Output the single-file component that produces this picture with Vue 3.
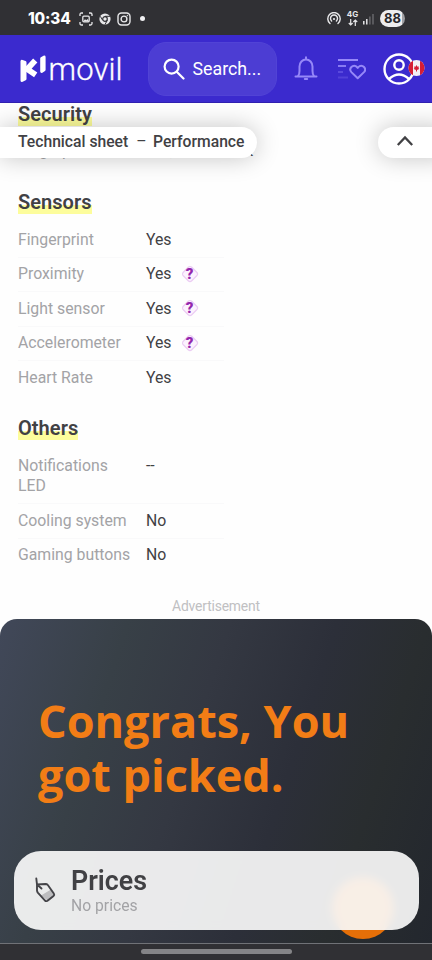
<script setup>
const sections = [
  { title: 'Security', rows: [{ label: 'Fingerprint', value: 'Yes, On the back' }] },
  {
    title: 'Sensors',
    rows: [
      { label: 'Fingerprint', value: 'Yes' },
      { label: 'Proximity', value: 'Yes', help: true },
      { label: 'Light sensor', value: 'Yes', help: true },
      { label: 'Accelerometer', value: 'Yes', help: true },
      { label: 'Heart Rate', value: 'Yes' },
    ],
  },
  {
    title: 'Others',
    rows: [
      { label: 'Notifications LED', value: '--' },
      { label: 'Cooling system', value: 'No' },
      { label: 'Gaming buttons', value: 'No' },
    ],
  },
]
</script>

<template>
  <div class="screen">
    <div class="status">
      <span class="time">10:34</span>
      <svg class="s-shot" width="14" height="14" viewBox="0 0 14 14" fill="none" stroke="#e8e8ea" stroke-width="1.3">
        <path d="M1 4V2.5Q1 1 2.5 1H4M10 1h1.5Q13 1 13 2.500V4M13 10v1.500Q13 13 11.500 13H10M4 13H2.500Q1 13 1 11.500V10" />
        <rect x="3.800" y="4.200" width="6.400" height="5.600" rx="1" />
        <path d="M4 9.500l2-2.200 1.300 1 1.200-1.300 1.700 2.500z" fill="#e8e8ea" stroke="none" />
      </svg>
      <svg class="s-chrome" width="12" height="12" viewBox="0 0 12 12">
        <circle cx="6" cy="6" r="5.600" fill="#e8e8ea" />
        <circle cx="6" cy="6" r="2.300" fill="#e8e8ea" stroke="#303034" stroke-width="1.200" />
        <path d="M6 3.300h5M3.700 7.300L1.300 3.300M8.300 7.300L6 11.500" stroke="#303034" stroke-width="1" />
      </svg>
      <svg class="s-insta" width="14" height="14" viewBox="0 0 14 14" fill="none" stroke="#e8e8ea" stroke-width="1.400">
        <rect x="1" y="1" width="12" height="12" rx="3.500" />
        <circle cx="7" cy="7" r="2.900" />
        <circle cx="10.400" cy="3.600" r=".5" fill="#e8e8ea" stroke-width=".4" />
      </svg>
      <i class="dot"></i>
      <span class="grow"></span>
      <svg class="s-cast" width="14" height="13" viewBox="0 0 14 13" fill="none" stroke="#e8e8ea" stroke-width="1.400" stroke-linecap="round">
        <path d="M3 11.500A6.200 6.200 0 1 1 11 11.500M4.600 9A3.500 3.500 0 1 1 9.400 9" />
        <circle cx="7" cy="7" r="1.100" fill="#e8e8ea" stroke="none" />
      </svg>
      <div class="net">
        <span>4G</span>
        <svg width="10" height="7" viewBox="0 0 10 7" fill="none" stroke="#e8e8ea" stroke-width="1.200">
          <path d="M2.700 0v6M.8 4l1.900 2 1.900-2M7.300 7V1M5.400 3l1.900-2 1.900 2" />
        </svg>
      </div>
      <svg class="s-signal" width="11" height="12" viewBox="0 0 11 12">
        <path d="M.8 8v3.500M3.800 6v5.500" stroke="#f0f0f2" stroke-width="1.400" />
        <path d="M6.900 3.500v8M10 1v10.500" stroke="#747479" stroke-width="1.200" />
      </svg>
      <span class="battery">88</span>
    </div>

    <header class="header">
      <div class="logo">
        <svg width="27" height="30" viewBox="0 0 27 30" fill="none" stroke="#fff" stroke-linejoin="round" stroke-linecap="round">
          <path d="M2 7.300V26.500L5 25V8.500z" stroke-width="3" fill="#fff" />
          <path d="M13.300 8.600L7.200 15.200L13.300 19.300" stroke-width="5.800" stroke-linecap="square" />
          <path d="M21.600 4.500v13l2.600-1.700V3z" stroke-width="2.800" fill="#fff" />
        </svg>
        <span>movil</span>
      </div>
      <div class="search">
        <svg width="22" height="22" viewBox="0 0 22 22" fill="none" stroke="#fff" stroke-width="2.200" stroke-linecap="round">
          <circle cx="8.600" cy="8.600" r="7" />
          <path d="M14 14l6.500 6.500" />
        </svg>
        <span>Search...</span>
      </div>
      <svg class="bell" width="24" height="25" viewBox="0 0 24 25" fill="none" stroke="#9688f8" stroke-width="2" stroke-linejoin="round" stroke-linecap="round">
        <path d="M1.500 20.500h21M4 20c1-1 1.500-2.500 1.500-5v-4.500a6.500 7 0 0 1 13 0V15c0 2.500.5 4 1.500 5M12 3V1.300M10.800 23h2.400" />
      </svg>
      <svg class="wish" width="29" height="22" viewBox="0 0 29 22" fill="none" stroke="#9688f8" stroke-width="2" stroke-linejoin="round">
        <path d="M1 2h20" />
        <path d="M1 8h8" opacity=".85" />
        <path d="M1 14h5" opacity=".35" />
        <path d="M1 19.500h10" opacity=".25" />
        <path d="M20.700 20.300l-6.300-6.200a3.700 3.700 0 0 1 0-5.100c1.600-1.700 4.100-1.700 5.500 0l.8 1 .8-1c1.400-1.700 3.900-1.700 5.500 0a3.700 3.700 0 0 1 0 5.100z" />
      </svg>
      <svg class="user" width="42" height="32" viewBox="0 0 42 32" fill="none">
        <g stroke="#fff" stroke-width="2.400">
          <circle cx="16" cy="16" r="14.500" />
          <circle cx="16" cy="12" r="4.700" />
          <path d="M6 26q10-9 20 0" />
        </g>
        <clipPath id="flag"><circle cx="33.500" cy="15" r="8" /></clipPath>
        <g clip-path="url(#flag)">
          <path fill="#f3eef4" d="M25 7h17v16H25z" />
          <path fill="#d51d35" d="M25 7h5v16h-5zM37 7h5v16h-5zM33.500 12l1 1.700 1.500-.2-.5 1.500.8 1-2.300 1v1.500h-1V17l-2.300-1 .8-1-.5-1.500 1.500.2z" />
        </g>
      </svg>
    </header>

    <main class="specs">
      <section v-for="s in sections" :key="s.title">
        <h2><span>{{ s.title }}</span></h2>
        <dl>
          <div v-for="r in s.rows" :key="r.label" class="row">
            <dt>{{ r.label }}</dt>
            <dd>
              {{ r.value }}
              <span v-if="r.help" class="help">
                <svg width="18" height="18" viewBox="0 0 18 18"><rect x="3" y="3" width="12" height="12" rx="2.500" transform="rotate(45 9 9)" fill="#fcf2fe" stroke="#ebccf3" stroke-width="1.200" /></svg>
                <b>?</b>
              </span>
            </dd>
          </div>
        </dl>
      </section>
      <p class="ad-label">Advertisement</p>
    </main>

    <section class="ad">
      <p>Congrats, You<br />got picked.</p>
      <i class="orb"></i>
    </section>

    <div class="home"><i></i></div>

    <div class="crumb">Technical sheet<span>–</span>Performance</div>
    <div class="totop">
      <svg width="18" height="12" viewBox="0 0 18 12" fill="none" stroke="#414144" stroke-width="2.300"><path d="M1.800 10L9 2.500l7.200 7.500" /></svg>
    </div>

    <div class="prices">
      <svg width="24" height="28" viewBox="0 0 24 28" fill="none" stroke="#444448" stroke-width="1.900" stroke-linejoin="round" stroke-linecap="round">
        <path d="M8 18.500L18 12.500l3.300 5q.7 1.300-.5 2.300l-4.600 3.700q-1.200.8-2.200-.4z" fill="#bdbdbf" stroke="none" />
        <path d="M4 7.500l8.500-.5q1.500 0 2.300 1l6 8.500q1 1.400-.3 2.500l-6 4.700q-1.600 1-2.700-.4L4.800 15.600q-.7-1-.8-2.200zM3.300 1.500L4 7.500l4.500 4" />
      </svg>
      <div>
        <h3>Prices</h3>
        <p>No prices</p>
      </div>
    </div>
  </div>
</template>

<style>
body { margin: 0; background: #fff; }
</style>

<style scoped>
* { box-sizing: border-box; }
h2, h3, p, dl, dd { margin: 0; }
svg { display: block; flex: none; }
.screen { position: relative; width: 432px; height: 960px; overflow: hidden; display: flex; flex-direction: column; background: #fefefe; font-family: Roboto, "Liberation Sans", sans-serif; color: #414144; }
.status { height: 35px; flex: none; display: flex; align-items: center; padding: 2px 27px 0 28px; background: #303034; color: #fff; position: relative; z-index: 3; }
.time { font: 800 15.300px/20px Inter, sans-serif; width: 51px; letter-spacing: -.15px; }
.s-chrome { margin-left: 6px; }
.s-insta { margin-left: 6px; }
.dot { width: 5px; height: 5px; border-radius: 50%; background: #f0f0f2; margin-left: 9px; }
.grow { flex: 1; }
.net { margin-left: 6px; width: 11px; display: flex; flex-direction: column; align-items: center; color: #e8e8ea; font: 700 8px/7px Inter, sans-serif; gap: 1px; }
.s-signal { margin-left: 5px; }
.battery { margin-left: 6px; width: 25px; height: 17px; border-radius: 9px; background: linear-gradient(90deg, #ededef 86%, #a0a0a4 86%); color: #28282c; font: 700 13px/17px Inter, sans-serif; text-align: center; }

.header { height: 68px; flex: none; display: flex; align-items: center; padding: 0 7px 0 20px; background: #3b2ace; position: relative; z-index: 2; border-bottom: 1px solid #3020b0; }
.logo { display: flex; align-items: center; width: 128px; color: #fff; }
.logo span { font-size: 31px; line-height: 38px; font-weight: 300; letter-spacing: .15px; margin-left: 1.500px; padding-top: 2px; -webkit-text-stroke: .3px #fff; }
.search { width: 129px; height: 54px; border-radius: 18px; background: #4c3dd3; border: 1px solid #5143d6; display: flex; align-items: center; padding-left: 14px; gap: 7.500px; color: #fff; font-size: 17.800px; white-space: nowrap; }
.bell { margin-left: 17px; }
.wish { margin-left: 19px; }
.user { margin-left: 17px; }

.specs { height: 516px; flex: none; padding-left: 18px; position: relative; overflow: hidden; }
.specs section { margin-bottom: 21.300px; }
.specs section:first-child { margin-top: -1.300px; }
.specs section:first-child dd { letter-spacing: -.6px; }
h2 { height: 24px; font-size: 20px; line-height: 24px; font-weight: 600; letter-spacing: .05px; margin-bottom: 8.500px; }
h2 span { display: inline-block; background: linear-gradient(transparent 62%, #fdfd9c 62%); }
.row { display: flex; width: 206px; padding: 7px 0 6.500px; line-height: 20.500px; font-size: 15.800px; border-bottom: 1px solid #f9f9fa; margin-bottom: -.5px; }
.row:last-child { border-color: transparent; }
dt { width: 128px; padding-right: 14px; color: #a3a3a6; flex: none; }
dd { display: flex; align-items: center; white-space: nowrap; height: 20.500px; }
.help { display: grid; place-items: center; margin: -1px 0 0 9px; }
.help > * { grid-area: 1 / 1; }
.help b { font-size: 15px; line-height: 18px; color: #9427ad; font-weight: 900; }
.ad-label { position: absolute; left: 0; right: 0; bottom: 4px; text-align: center; font-size: 13.900px; line-height: 18px; color: #c0c0c2; letter-spacing: -.18px; }

.ad { height: 324px; flex: none; border-radius: 17px 17px 0 0; position: relative; background: linear-gradient(108deg, #414859 0%, #384047 24%, #343842 43%, #2c2f39 63%, #292d2f 80%, #23272e 100%); padding: 75px 38px; }
.ad p { font: 700 45px/54px "Open Sans", sans-serif; color: #f27d16; white-space: nowrap; }
.orb { position: absolute; left: 332px; top: 258px; width: 62px; height: 62px; border-radius: 50%; background: #e56f08; }
.home { height: 17px; flex: none; background: #303034; border-top: 1px solid #707277; display: flex; justify-content: center; padding-top: 5px; }
.home i { width: 151px; height: 5px; border-radius: 3px; background: #848487; }

.crumb { position: absolute; z-index: 1; left: 0; top: 127px; width: 257px; height: 31px; border-radius: 0 16px 16px 0; background: #fff; box-shadow: 0 0 25px rgba(0, 0, 0, .23); padding-left: 18px; font-size: 15.700px; line-height: 30px; font-weight: 500; white-space: nowrap; }
.crumb span { margin: 0 6.500px 0 8px; font-weight: 400; }
.totop { position: absolute; z-index: 1; left: 378px; top: 127px; width: 75px; height: 31px; border-radius: 16px; background: #fff; box-shadow: 0 0 25px rgba(0, 0, 0, .23); padding: 8px 18px; }
.prices { position: absolute; left: 14px; top: 851px; width: 405px; height: 79px; border-radius: 27px; background: rgba(250, 250, 250, .92); backdrop-filter: blur(4px); display: flex; align-items: center; padding: 1px 0 0 19px; gap: 14px; }
.prices h3 { font-size: 26.800px; line-height: 29px; font-weight: 600; }
.prices p { font-size: 15.700px; line-height: 20px; color: #a3a3a6; }
</style>
